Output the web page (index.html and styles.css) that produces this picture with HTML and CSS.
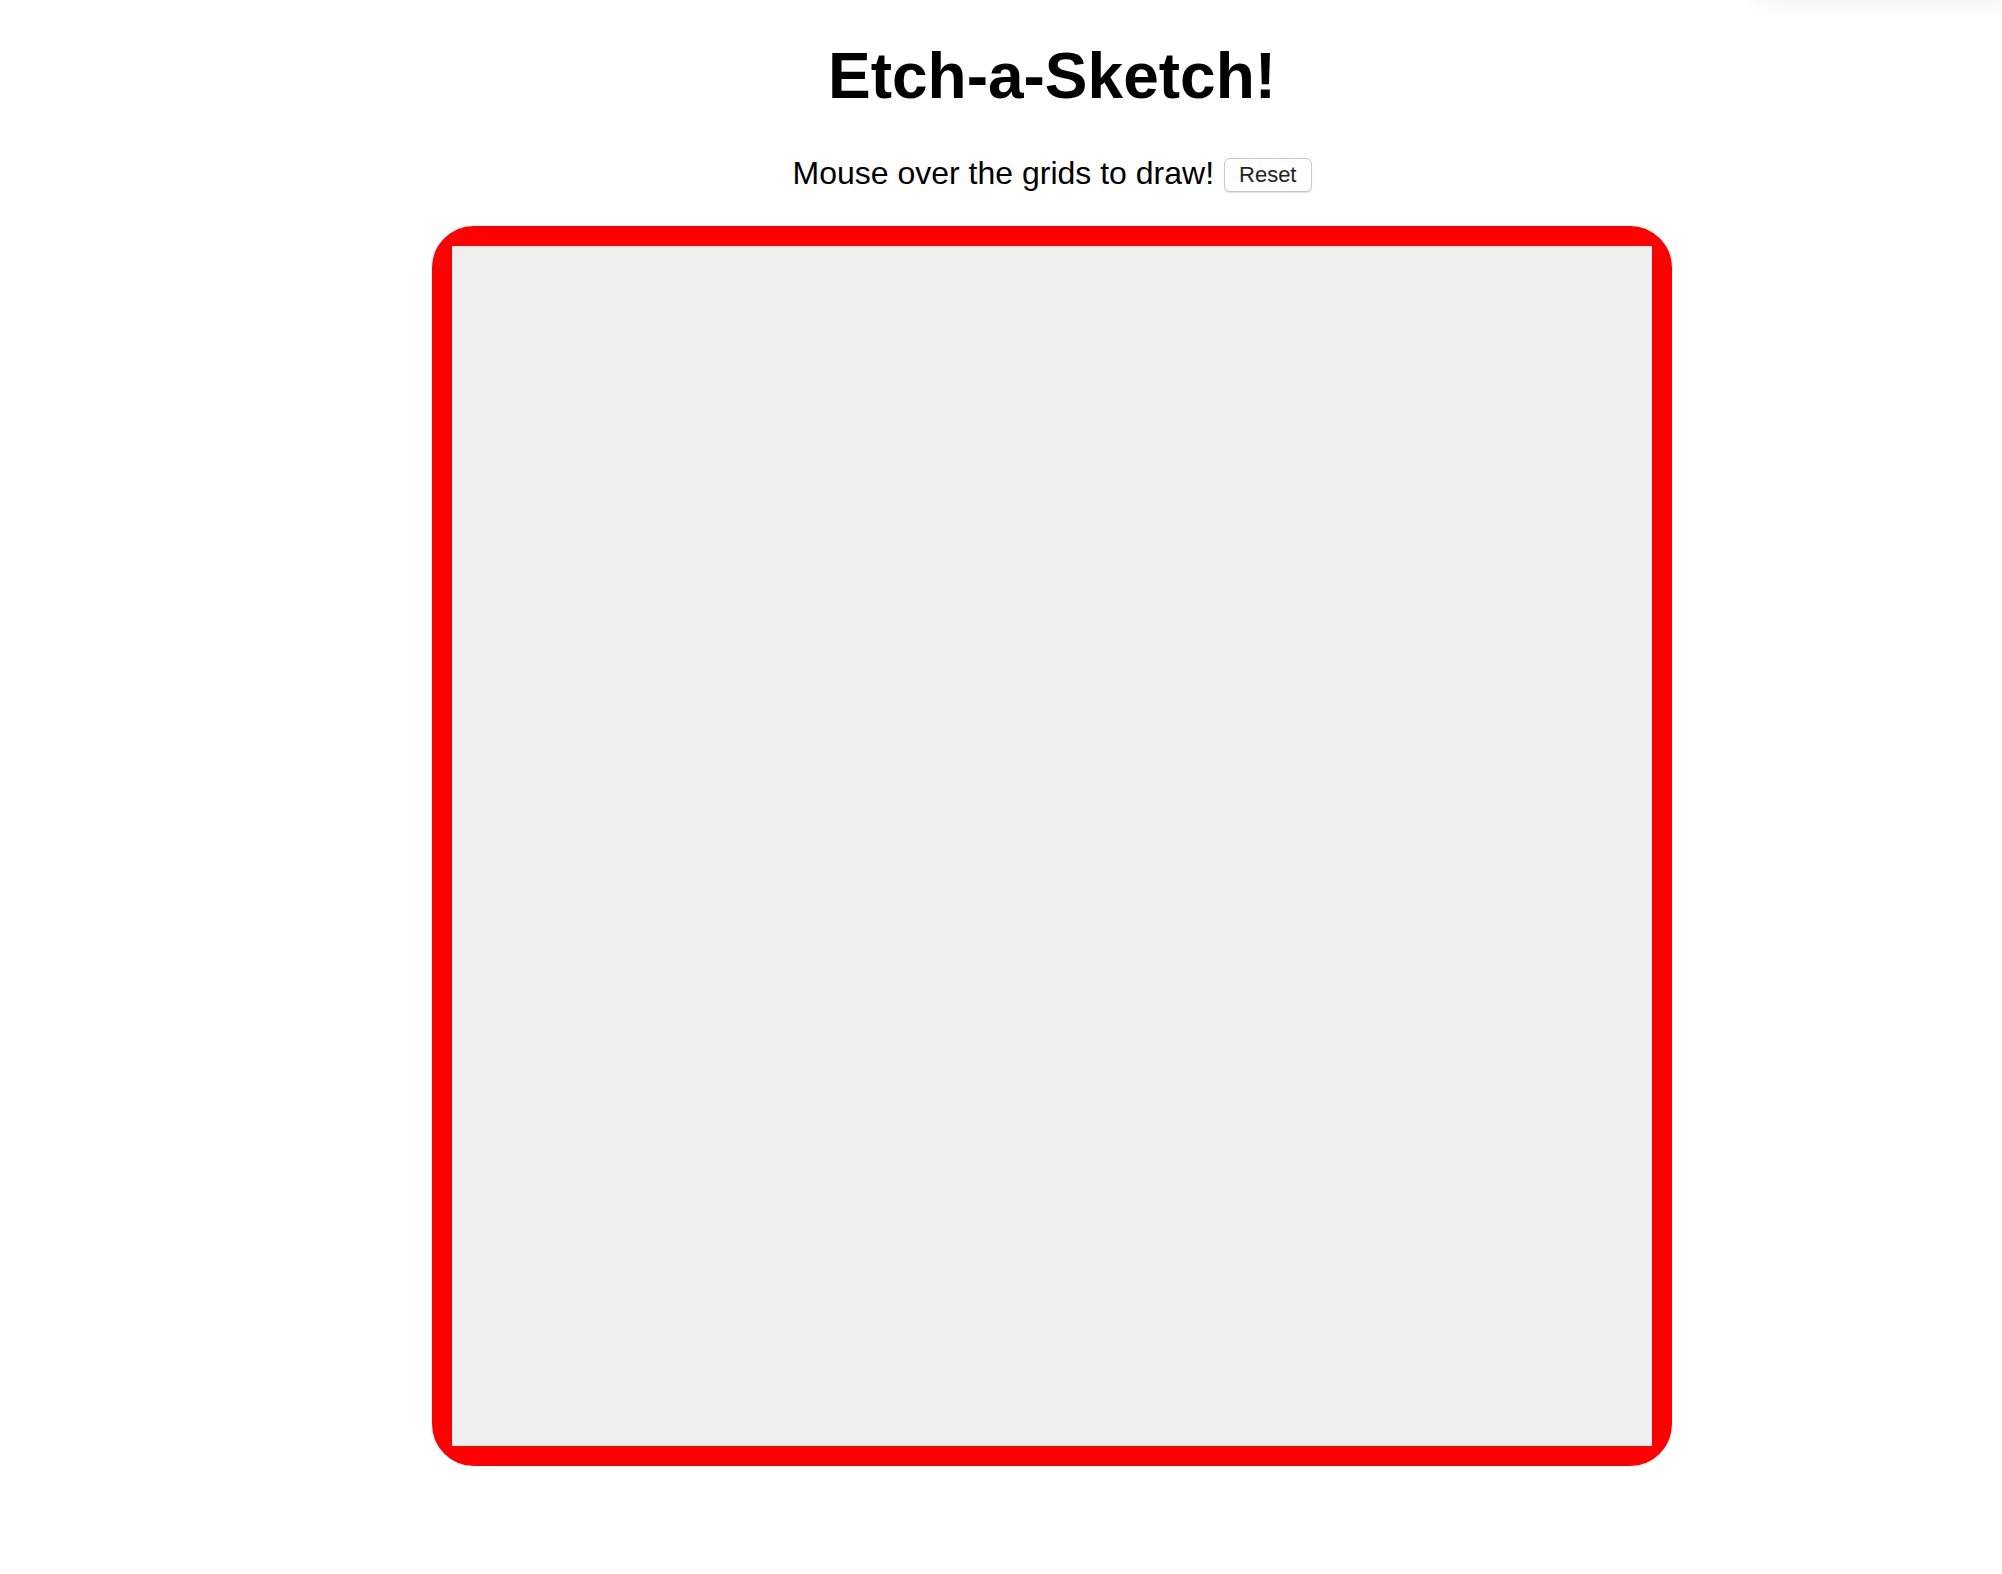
FILE: index.html
```html
<!DOCTYPE html>
<html lang="en">
<head>
<meta charset="utf-8">
<title>Etch-a-Sketch!</title>
<link rel="stylesheet" href="styles.css">
</head>
<body>
<div class="top-shadow"></div>
<main class="page">
  <h1 class="title">Etch-a-Sketch!</h1>
  <div class="instructions">
    <span class="hint">Mouse over the grids to draw!</span>
    <button class="reset" type="button">Reset</button>
  </div>
  <div class="frame">
    <div class="grid"></div>
  </div>
</main>
</body>
</html>
```
FILE: styles.css
```css
html, body {
  margin: 0;
  padding: 0;
  background: #ffffff;
}

body {
  font-family: "Liberation Sans", Arial, Helvetica, sans-serif;
  color: #000;
  position: relative;
  overflow: hidden;
}

.top-shadow {
  position: absolute;
  top: -40px;
  right: -20px;
  width: 270px;
  height: 40px;
  background: #fff;
  border-radius: 10px;
  box-shadow: 0 0 22px rgba(0, 0, 0, 0.07);
}

.page {
  padding-left: 102px;
  display: flex;
  flex-direction: column;
  align-items: center;
}

.title {
  margin: 40px 0 0;
  font-size: 64px;
  line-height: 72px;
  font-weight: 700;
}

.instructions {
  margin-top: 42px;
  display: flex;
  align-items: center;
  gap: 10px;
  height: 38px;
}

.hint {
  font-size: 32px;
  line-height: 38px;
}

.reset {
  font-family: "Liberation Sans", Arial, sans-serif;
  font-size: 22px;
  color: #222;
  background: #fff;
  border: 1px solid #c6c6c6;
  border-radius: 6px;
  box-shadow: 0 1px 1px rgba(0, 0, 0, 0.12);
  height: 34px;
  padding: 0 14px;
  margin-top: 4px;
}

.frame {
  margin-top: 34px;
  width: 1240px;
  height: 1240px;
  box-sizing: border-box;
  border: 20px solid #ff0000;
  border-radius: 42px;
}

.grid {
  width: 1200px;
  height: 1200px;
  background: #efefef;
}
```
